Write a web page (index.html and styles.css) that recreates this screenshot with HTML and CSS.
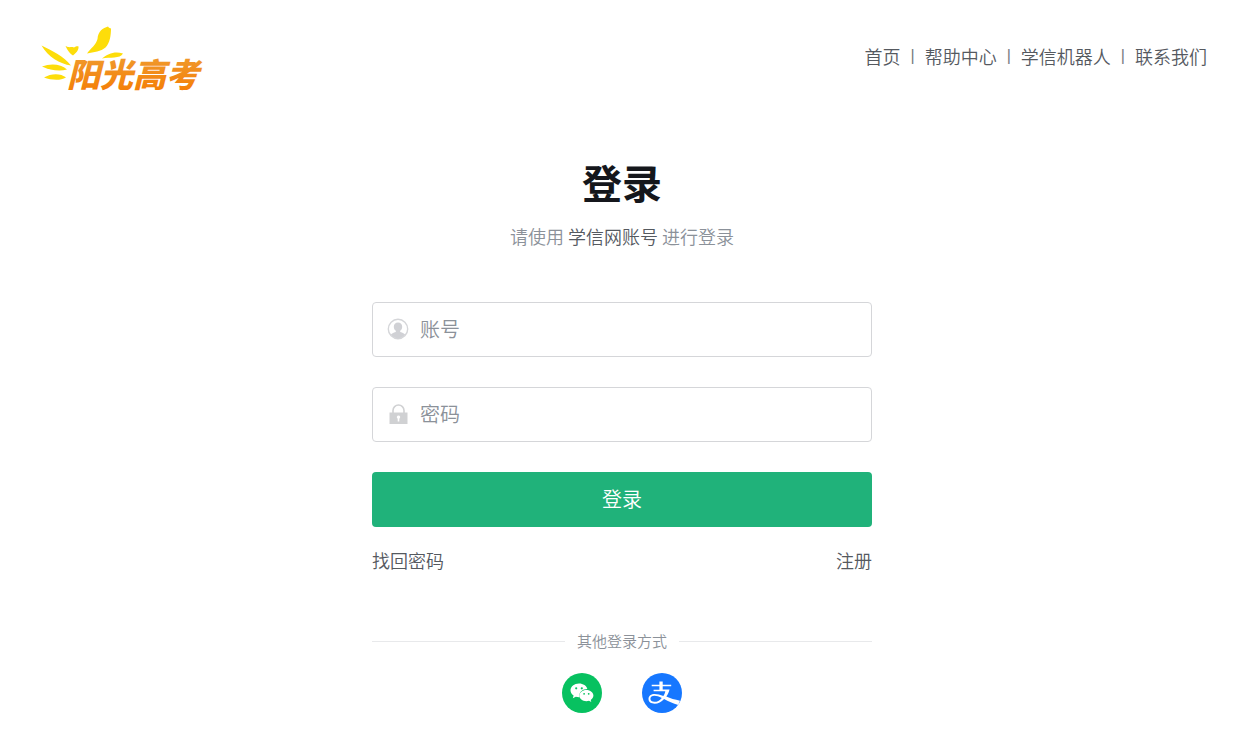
FILE: index.html
```html
<!DOCTYPE html>
<html lang="zh-CN">
<head>
<meta charset="utf-8">
<meta name="viewport" content="width=device-width, initial-scale=1">
<title>登录</title>
<link rel="stylesheet" href="styles.css">
</head>
<body>
<header class="header">
  <a class="logo" href="#" aria-label="阳光高考">
    <svg class="logo-art" viewBox="0 0 180 85" role="img">
      <defs>
        <linearGradient id="sun" x1="0" y1="0" x2="0" y2="1">
          <stop offset="0.2" stop-color="#f0982a"/>
          <stop offset="1" stop-color="#f57a00"/>
        </linearGradient>
      </defs>
      <g fill="#fddd0a">
        <path d="M57 38.500 C61 33 66 30 67.500 24 C68 16 73 13 78 11.500 C79 13 80 13 81 13.500 C81 20 80 28 75.500 32.500 C71 36.500 64 37 57 38.500Z"/>
        <path d="M35.500 31 C39 33 41 31.500 44 32.500 C46 31 48 31 48.500 31.500 C49 35 46 38 43 40.500 C40 39 38 36 35.500 31Z"/>
        <path d="M11.500 30.500 C22 36 34 41 41 50.500 C30 49 18 42 11.500 30.500Z"/>
        <path d="M12 51.500 C21 48 31 49 37 54.500 C29 57 20 55 12 51.500Z"/>
        <path d="M14 62.500 C21 58 31 58 36 62.500 C30 66 21 65 14 62.500Z"/>
        <path d="M72 43.500 C78 39 84 36 93 38.500 C90 44 80 42 72 43.500Z"/>
      </g>
      <text class="logo-text" x="37" y="72" fill="url(#sun)">阳光高考</text>
    </svg>
  </a>
  <nav class="nav">
    <a href="#">首页</a><span class="bar">|</span>
    <a href="#">帮助中心</a><span class="bar">|</span>
    <a href="#">学信机器人</a><span class="bar">|</span>
    <a href="#">联系我们</a>
  </nav>
</header>
<main class="login">
  <h1 class="title">登录</h1>
  <p class="subtitle">请使用 <strong>学信网账号</strong> 进行登录</p>
  <form class="form">
    <label class="field">
      <svg class="field-icon" viewBox="0 0 22 22" aria-hidden="true">
        <circle cx="11" cy="11" r="9.700" fill="none" stroke="#d5d6d9" stroke-width="1.400"/>
        <path fill="#d0d1d5" d="M11 4.500c2.600 0 4.200 1.800 4.200 4.200 0 1.800-.8 3.200-2 4v1.200c2.500.7 4.300 1.600 5 2.700A9.500 9.500 0 0 1 11 20.500a9.500 9.500 0 0 1-7.200-3.900c.7-1.100 2.500-2 5-2.700v-1.200c-1.200-.8-2-2.200-2-4 0-2.400 1.600-4.200 4.200-4.200z"/>
      </svg>
      <input class="input" type="text" placeholder="账号" aria-label="账号">
    </label>
    <label class="field">
      <svg class="field-icon" viewBox="0 0 22 22" aria-hidden="true">
        <path d="M6 10V7.500a5.500 5.500 0 0 1 11 0V10" fill="none" stroke="#d0d1d3" stroke-width="1.600"/>
        <path fill="#d0d1d3" d="M2.500 9.500h18V21h-18z"/>
        <path fill="#fff" d="M11.500 12.500a1.700 1.700 0 0 1 .8 3.200V18.500h-1.600v-2.800a1.700 1.700 0 0 1 .8-3.200z"/>
      </svg>
      <input class="input" type="password" placeholder="密码" aria-label="密码">
    </label>
    <button class="submit" type="submit">登录</button>
  </form>
  <div class="links"><a href="#">找回密码</a><a href="#">注册</a></div>
  <div class="divider">其他登录方式</div>
  <div class="social">
    <a href="#" aria-label="微信">
      <svg class="social-icon" viewBox="0 0 40 40">
        <circle cx="20" cy="20" r="20" fill="#07c160"/>
        <path fill="#fff" d="M17 10.500c-4.700 0-8.500 3-8.500 6.800 0 2.200 1.200 4 3.100 5.300l-.8 2.600 3-1.500c1 .3 2 .5 3.200.5h.7a6 6 0 0 1-.3-1.900c0-3.500 3.500-6.400 7.900-6.400-.7-3.100-4.200-5.400-8.300-5.400z"/>
        <path fill="#fff" d="M24.400 16.900c-4 0-7 2.500-7 5.600s3 5.700 7 5.700c.9 0 1.800-.1 2.600-.4l2.300 1.300-.6-2.100c1.600-1.100 2.700-2.700 2.700-4.500 0-3.100-3.100-5.600-7-5.600z"/>
        <g fill="#07c160"><circle cx="14.200" cy="15.300" r="1.100"/><circle cx="19.800" cy="15.300" r="1.100"/><circle cx="22.100" cy="20.800" r=".9"/><circle cx="26.700" cy="20.800" r=".9"/></g>
      </svg>
    </a>
    <a href="#" aria-label="支付宝">
      <svg class="social-icon" viewBox="0 0 40 40">
        <circle cx="20" cy="20" r="20" fill="#1677ff"/>
        <path fill="#fff" d="M17.400 8.500h3.300v3.200h8.500v1.600h-8.500v3.200h6.800c-.6 2.600-1.700 5-3.200 7.100 4 1.800 8.500 3.200 13.700 4.100l-1.700 4.200c-5.300-1.500-10-3.700-14.200-6-2.700 3-6 4.800-9.400 4.800-3.800 0-6.200-1.900-6.200-4.700 0-2.900 2.600-4.900 6.200-4.900 2.700 0 5.600.7 8.700 2 .8-1.400 1.500-2.900 1.900-4.900H11.600v-1.500h5.800v-3.400H9.700v-1.600h7.700zM12.400 22.700c-2.400 0-4 1.200-4 3.100 0 1.800 1.600 3 4.100 3 2.600 0 5.100-1.400 7.300-3.900-2.700-1.400-5.100-2.200-7.400-2.200z"/>
      </svg>
    </a>
  </div>
</main>
</body>
</html>
```
FILE: styles.css
```css
* {
  box-sizing: border-box;
}

body {
  margin: 0;
  background: #fff;
  color: #55595f;
  font-family: "Noto Sans CJK SC", sans-serif;
  font-size: 18px;
  font-weight: 350;
  line-height: 24px;
}

a {
  color: inherit;
  text-decoration: none;
}

.header {
  display: flex;
  justify-content: space-between;
  align-items: center;
  padding: 15px 37px 0 30px;
}

.logo,
.logo-art,
.field-icon,
.social-icon {
  display: block;
}

.logo-art {
  width: 180px;
  overflow: visible;
}

.logo-text {
  font-size: 33px;
  font-style: italic;
  font-weight: 900;
}

.nav {
  display: flex;
  gap: 10px;
  padding-bottom: 4px;
}

.bar {
  color: #777b80;
  font-family: "Liberation Sans", sans-serif;
  font-size: 16px;
}

.login {
  max-width: 532px;
  margin: 0 auto;
  padding: 52px 16px 32px;
}

.title {
  margin: 0;
  color: #15171c;
  font-size: 40px;
  font-weight: 700;
  line-height: 60px;
  text-align: center;
}

.subtitle {
  margin: 12px 0 0;
  color: #8b9199;
  text-align: center;
}

.subtitle strong {
  color: #55595f;
  font-weight: 350;
}

.form {
  display: grid;
  gap: 30px;
  margin-top: 54px;
}

.field {
  display: flex;
  align-items: center;
  gap: 11px;
  height: 55px;
  padding: 0 14px 2px;
  border: 1px solid #d5d6d9;
  border-radius: 4px;
}

.field:focus-within {
  border-color: #20b27a;
}

.field-icon {
  flex: none;
  width: 22px;
}

.input {
  flex: 1;
  min-width: 0;
  padding: 0;
  border: 0;
  outline: 0;
  background: none;
  color: #15171c;
  font: inherit;
  font-size: 20px;
}

.input::placeholder {
  color: #8b9199;
  opacity: 1;
}

.submit {
  height: 55px;
  padding: 0 0 2px;
  border: 0;
  border-radius: 4px;
  background: #20b27a;
  color: #fff;
  font: inherit;
  font-size: 20px;
  cursor: pointer;
}

.links {
  display: flex;
  justify-content: space-between;
  margin-top: 21px;
}

.divider {
  display: flex;
  align-items: center;
  gap: 12px;
  margin-top: 57px;
  color: #8b9199;
  font-size: 15px;
}

.divider::before,
.divider::after {
  flex: 1;
  height: 1px;
  background: #e8e9eb;
  content: "";
}

.social {
  display: flex;
  justify-content: center;
  gap: 40px;
  margin-top: 20px;
}

.social-icon {
  width: 40px;
}
```
